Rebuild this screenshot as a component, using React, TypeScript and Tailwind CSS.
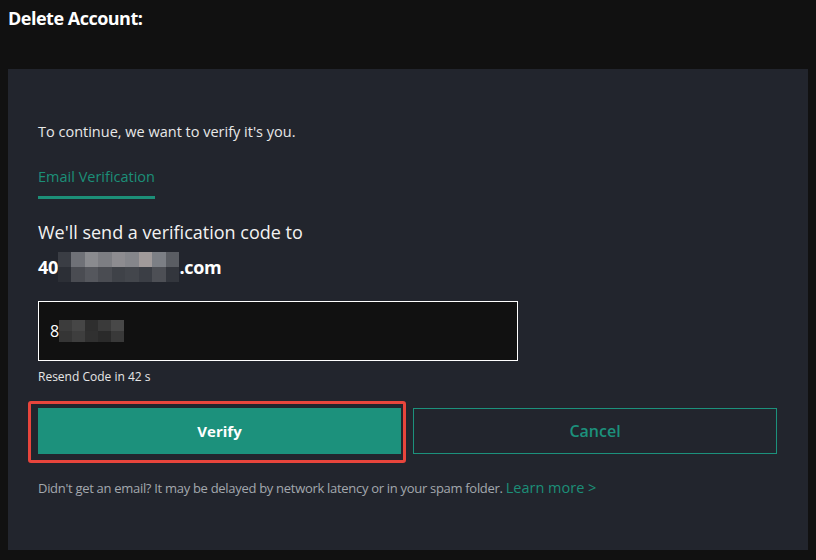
import React from 'react';

const emailBlocks = [
  ['#3a3d44', '#6f7177', '#8a8b8f', '#7d7e83', '#8d8c90', '#85868b', '#a09a9a', '#7c7f85', '#5a5d63'],
  ['#2c2f36', '#4a4c52', '#55575d', '#4a4c52', '#3f4248', '#43464c', '#3b3e45', '#4d4f55', '#33363d'],
];

const codeBlocks = [
  ['#3c3c3c', '#464646', '#2e2e2e', '#3a3a3a', '#484848'],
  ['#353535', '#3e3e3e', '#303030', '#2a2a2a', '#393939'],
];

function Mosaic({ rows, cell, h }: { rows: string[][]; cell: number; h: number }) {
  return (
    <span className="inline-flex flex-col align-middle">
      {rows.map((row, i) => (
        <span key={i} className="flex">
          {row.map((c, j) => (
            <span key={j} style={{ backgroundColor: c, width: cell, height: h }} />
          ))}
        </span>
      ))}
    </span>
  );
}

export default function App() {
  return (
    <div
      className="w-[816px] h-[560px] bg-[#111111] text-white overflow-hidden px-2 pt-[6px]"
      style={{ fontFamily: '"Open Sans", "Liberation Sans", sans-serif' }}
    >
      {/* Title */}
      <h1 className="text-[18px] font-bold leading-[24px] tracking-[-0.5px]">Delete Account:</h1>

      {/* Card */}
      <div className="mt-[39px] bg-[#22252d] h-[481px] pl-[30px] pr-[31px] pt-[52px]">
        <p className="text-[14.5px] leading-[22px] text-[#e8e8e8]">
          To continue, we want to verify it's you.
        </p>

        {/* Tab */}
        <div className="mt-[24px] inline-block">
          <div className="text-[14.5px] leading-[20px] text-[#1c8f78]">Email Verification</div>
          <div className="mt-[9px] h-[3px] w-[117px] bg-[#1c8f78]" />
        </div>

        <div className="mt-[20px] text-[18px] leading-[26px] text-[#f2f2f2]">
          We'll send a verification code to
        </div>
        <div className="mt-[7px] flex items-center text-[18px] font-bold leading-[26px] tracking-[-0.3px]">
          <span>40</span>
          <Mosaic rows={emailBlocks} cell={13.5} h={15} />
          <span>.com</span>
        </div>

        {/* Code input */}
        <div className="mt-[19px] w-[480px] h-[60px] border border-white bg-[#111111] flex items-center pl-[11px]">
          <span className="text-[16px] leading-[20px]">8</span>
          <Mosaic rows={codeBlocks} cell={13} h={11} />
        </div>
        <div className="mt-[8px] text-[12px] leading-[16px] text-[#e6e6e6]">Resend Code in 42 s</div>

        {/* Buttons */}
        <div className="mt-[16px] flex items-start">
          <div className="-ml-[10px] border-[3px] border-[#e8453c] rounded-[3px] pl-[7px] pr-[2px] pt-[4px] pb-[6px]">
            <button className="block w-[363px] h-[46px] bg-[#1c917c] text-white text-[15px] font-bold">
              Verify
            </button>
          </div>
          <button className="ml-[7px] mt-[7px] w-[364px] h-[46px] border border-[#1c917c] text-[#1c917c] text-[16px] font-semibold">
            Cancel
          </button>
        </div>

        <p className="mt-[15px] text-[13px] leading-[20px] text-[#a3a8ae] tracking-[-0.3px]">
          Didn't get an email? It may be delayed by network latency or in your spam folder.{' '}
          <span className="text-[14.5px] text-[#1c8f78] tracking-normal">Learn more &gt;</span>
        </p>
      </div>
    </div>
  );
}
